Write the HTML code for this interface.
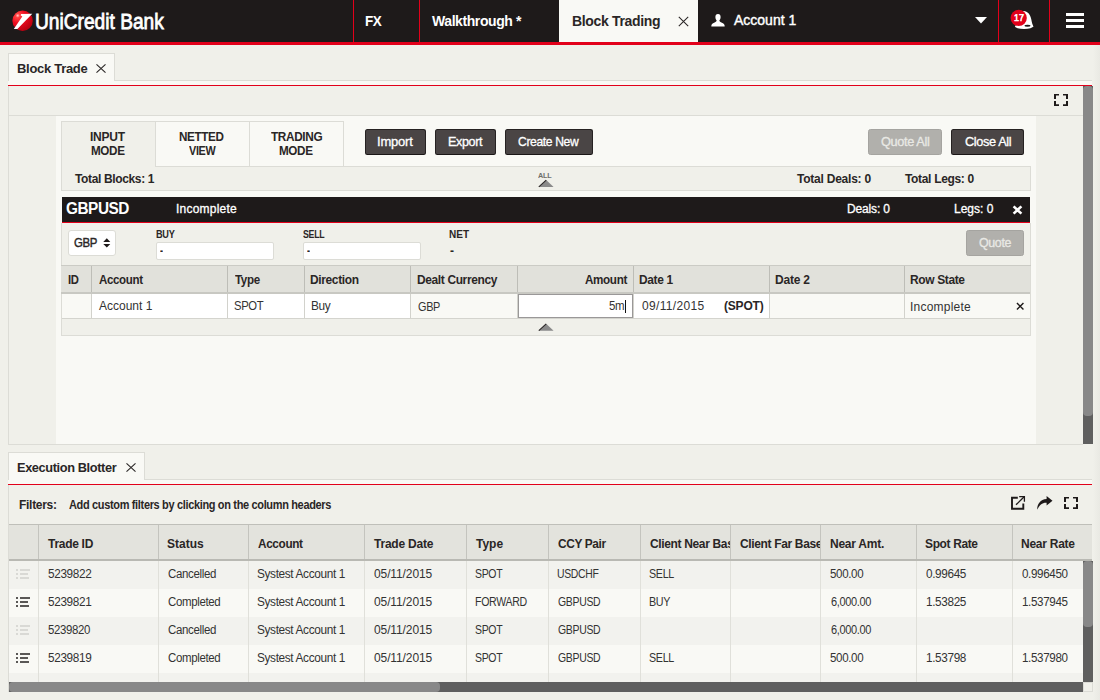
<!DOCTYPE html>
<html><head><meta charset="utf-8"><title>UniCredit Bank - Block Trading</title>
<style>
*{box-sizing:border-box;margin:0;padding:0}
html,body{width:1100px;height:700px;overflow:hidden;background:#f0f0ea;font-family:"Liberation Sans",sans-serif;color:#2a2626}
.abs,.b{position:absolute}
.t{position:absolute;white-space:nowrap;line-height:1}
svg{position:absolute;overflow:visible}
.btn{position:absolute;background:#4a4545;border:1px solid #262222;border-bottom-color:#1a1616;border-radius:2.5px}
.btn.dis{background:#b1b0ac;border-color:#a5a4a0}
.vl{position:absolute;width:1px;background:#c4c4be}
.hl{position:absolute;height:1px;background:#d9d9d3}
</style></head><body>

<!-- ===== header ===== -->
<div class="b" style="left:0;top:0;width:1100px;height:42px;background:#1e1a1a"></div>
<div class="b" style="left:0;top:42px;width:1100px;height:3px;background:#e2001a"></div>
<div class="b" style="left:559px;top:0;width:139px;height:42px;background:#f9f9f5"></div>
<div class="b" style="left:353px;top:0;width:1px;height:42px;background:#e2001a"></div>
<div class="b" style="left:419px;top:0;width:1px;height:42px;background:#e2001a"></div>
<div class="b" style="left:998px;top:0;width:1px;height:42px;background:#e2001a"></div>
<div class="b" style="left:1049px;top:0;width:1px;height:42px;background:#e2001a"></div>
<!-- logo ball -->
<svg style="left:12px;top:10px" width="22" height="22" viewBox="0 0 22 22">
 <defs><radialGradient id="g1" cx="0.26" cy="0.25" r="0.85"><stop offset="0" stop-color="#ffd0d0"/><stop offset="0.12" stop-color="#ff4040"/><stop offset="0.45" stop-color="#ec0a1e"/><stop offset="1" stop-color="#b4000f"/></radialGradient></defs>
 <circle cx="10.6" cy="10.7" r="10.2" fill="url(#g1)"/>
 <path d="M9.1 4.1 L20.3 3.8 L5.4 18.9 L1.8 18.9 L10.3 6.4 L8.6 5.3 Z" fill="#fff"/>
</svg>
<!-- tab close X -->
<svg style="left:678px;top:16px" width="11" height="11" viewBox="0 0 11 11"><path d="M0.8 0.9 L10.2 10.1 M10.2 0.9 L0.8 10.1" stroke="#2a2626" stroke-width="1.05" fill="none"/></svg>
<!-- person -->
<svg style="left:710.7px;top:13.7px" width="14" height="12.4" viewBox="0 0 14 12.4"><path d="M7 0 C8.8 0 9.6 1.3 9.6 3 C9.6 4.4 9.1 5.6 8.4 6.3 C8.4 7.3 9 7.8 10.4 8.4 C12.8 9.3 13.7 10 13.7 12.4 L0.3 12.4 C0.3 10 1.2 9.3 3.6 8.4 C5 7.8 5.6 7.3 5.6 6.3 C4.9 5.6 4.4 4.4 4.4 3 C4.4 1.3 5.2 0 7 0 Z" fill="#fff"/></svg>
<!-- dropdown caret -->
<svg style="left:975px;top:17px" width="12" height="7" viewBox="0 0 12 7"><path d="M0 0 L12 0 L6 6.5 Z" fill="#fff"/></svg>
<!-- bell + badge -->
<svg style="left:1010px;top:9px" width="25" height="22" viewBox="0 0 25 22">
 <path d="M13.6 1.9 C17.6 2.2 20.2 5 21.2 10 C21.8 13.4 22.4 15.4 23.3 17.2 L23.3 18 L10 18 L10 4 Z" fill="#fff"/>
 <ellipse cx="14" cy="17.3" rx="9.1" ry="2.7" fill="#fff"/>
 <ellipse cx="17.5" cy="16.8" rx="3.1" ry="1" fill="#1e1a1a"/>
 <circle cx="8.7" cy="8.9" r="8.1" fill="#e2001a"/>
</svg>
<!-- hamburger -->
<div class="b" style="left:1066px;top:13px;width:18px;height:3px;background:#fff"></div>
<div class="b" style="left:1066px;top:19px;width:18px;height:3px;background:#fff"></div>
<div class="b" style="left:1066px;top:25px;width:18px;height:3px;background:#fff"></div>

<div class="b" style="left:1093px;top:45px;width:7px;height:655px;background:linear-gradient(90deg,#f0f0ea,#e9e9e3)"></div>
<!-- ===== Block Trade tab strip ===== -->
<div class="b" style="left:8px;top:80px;width:1084px;height:1px;background:#dcdcd6"></div>
<div class="b" style="left:8px;top:81px;width:1084px;height:4px;background:#f9f9f5"></div>
<div class="b" style="left:8px;top:53px;width:107px;height:28px;background:#f9f9f5;border:1px solid #dcdcd6;border-bottom:0"></div>
<div class="b" style="left:8px;top:85px;width:1084px;height:1px;background:#e2001a"></div>
<svg style="left:96px;top:64px" width="10" height="9" viewBox="0 0 10 9"><path d="M0.5 0.3 L9.5 8.7 M9.5 0.3 L0.5 8.7" stroke="#2a2626" stroke-width="1.1" fill="none"/></svg>
<!-- panel 1 -->
<div class="b" style="left:8px;top:86px;width:1px;height:359px;background:#dcdcd6"></div>
<div class="b" style="left:9px;top:115px;width:1074px;height:1px;background:#dcdcd6"></div>
<div class="b" style="left:8px;top:444px;width:1075px;height:1px;background:#dcdcd6"></div>
<div class="b" style="left:56px;top:116px;width:980px;height:328px;background:#f9f9f5"></div>
<!-- panel scrollbar -->
<div class="b" style="left:1083px;top:86px;width:10px;height:358px;background:#5f5f5f"></div>
<div class="b" style="left:1083px;top:86px;width:10px;height:330px;background:#888;border-radius:4px"></div>
<!-- expand icon -->
<svg style="left:1054px;top:94px" width="14" height="12" viewBox="0 0 14 12"><path d="M0 0 H5 V1.5 H2 V5 H0 Z M14 0 H9 V1.5 H12 V5 H14 Z M0 12 H5 V10.3 H2 V7 H0 Z M14 12 H9 V10.3 H12 V7 H14 Z" fill="#1e1a1a"/></svg>

<!-- mode tabs -->
<div class="b" style="left:61px;top:121px;width:283px;height:46px;background:#f9f9f5;border:1px solid #dcdcd6"></div>
<div class="b" style="left:62px;top:122px;width:93px;height:46px;background:#f0f0ea"></div>
<div class="b" style="left:155px;top:122px;width:1px;height:44px;background:#dcdcd6"></div>
<div class="b" style="left:249px;top:122px;width:1px;height:44px;background:#dcdcd6"></div>
<!-- totals bar -->
<div class="b" style="left:61px;top:166px;width:970px;height:25px;background:#f0f0ea;border:1px solid #dcdcd6"></div>
<div class="b" style="left:62px;top:166px;width:93px;height:2px;background:#f0f0ea"></div>
<svg style="left:538px;top:180px" width="16" height="7" viewBox="0 0 16 7"><path d="M0.6 6.9 L8.2 0.1 L15.6 6.9 Z" fill="#8a8a8a"/><path d="M0.8 6.8 L8.2 0.2" stroke="#2a2626" stroke-width="1.1" fill="none"/></svg>
<!-- buttons -->
<div class="btn" style="left:365px;top:129px;width:61px;height:26px"></div>
<div class="btn" style="left:435px;top:129px;width:61px;height:26px"></div>
<div class="btn" style="left:505px;top:129px;width:88px;height:26px"></div>
<div class="btn dis" style="left:868px;top:129px;width:74px;height:26px"></div>
<div class="btn" style="left:951px;top:129px;width:73px;height:26px"></div>

<!-- GBPUSD bar -->
<div class="b" style="left:62px;top:197px;width:968px;height:25px;background:#1e1a1a"></div>
<div class="b" style="left:62px;top:222px;width:968px;height:1px;background:#e2001a"></div>
<div class="b" style="left:61px;top:223px;width:970px;height:43px;background:#f0f0ea;border-left:1px solid #dcdcd6;border-right:1px solid #dcdcd6"></div>
<svg style="left:1012px;top:205px" width="11" height="10" viewBox="0 0 11 10"><path d="M1.6 1.4 L9.4 8.6 M9.4 1.4 L1.6 8.6" stroke="#fff" stroke-width="2.6" fill="none"/></svg>
<!-- select -->
<div class="b" style="left:68px;top:230px;width:48px;height:26px;background:#fff;border:1px solid #dcdcd6;border-radius:3px"></div>
<svg style="left:103.2px;top:237.8px" width="7.6" height="9.8" viewBox="0 0 8 10" preserveAspectRatio="none"><path d="M0.3 4 L4 0.3 L7.7 4 Z M0.3 6 L7.7 6 L4 9.7 Z" fill="#1e1a1a"/></svg>
<!-- inputs -->
<div class="b" style="left:156px;top:242px;width:118px;height:18px;background:#fff;border:1px solid #dcdcd6;border-radius:2px"></div>
<div class="b" style="left:303px;top:242px;width:118px;height:18px;background:#fff;border:1px solid #dcdcd6;border-radius:2px"></div>
<div class="btn dis" style="left:966px;top:230px;width:58px;height:26px"></div>

<!-- block table -->
<div class="b" style="left:61px;top:265px;width:970px;height:1px;background:#cbcbc5"></div>
<div class="b" style="left:61px;top:266px;width:970px;height:26px;background:#e1e1db"></div>
<div class="b" style="left:61px;top:292px;width:970px;height:2px;background:#c8c8c2"></div>
<div class="b" style="left:61px;top:294px;width:970px;height:24px;background:#fff"></div>
<div class="b" style="left:61px;top:294px;width:30px;height:24px;background:#f9f9f5"></div>
<div class="b" style="left:411px;top:294px;width:106px;height:24px;background:#f9f9f5"></div>
<div class="b" style="left:770px;top:294px;width:261px;height:24px;background:#f9f9f5"></div>
<div class="b" style="left:61px;top:318px;width:970px;height:1px;background:#d4d4ce"></div>
<div class="b" style="left:61px;top:319px;width:970px;height:17px;background:#f0f0ea;border:1px solid #dcdcd6;border-top:0"></div>
<div class="b" style="left:61px;top:294px;width:1px;height:42px;background:#dcdcd6"></div>
<div class="b" style="left:1030px;top:266px;width:1px;height:70px;background:#dcdcd6"></div>
<div class="b" style="left:91px;top:266px;width:1px;height:26px;background:#bdbdb7"></div>
<div class="b" style="left:91px;top:294px;width:1px;height:24px;background:#d2d2cc"></div>
<div class="b" style="left:227px;top:266px;width:1px;height:26px;background:#bdbdb7"></div>
<div class="b" style="left:227px;top:294px;width:1px;height:24px;background:#d2d2cc"></div>
<div class="b" style="left:304px;top:266px;width:1px;height:26px;background:#bdbdb7"></div>
<div class="b" style="left:304px;top:294px;width:1px;height:24px;background:#d2d2cc"></div>
<div class="b" style="left:410px;top:266px;width:1px;height:26px;background:#bdbdb7"></div>
<div class="b" style="left:410px;top:294px;width:1px;height:24px;background:#d2d2cc"></div>
<div class="b" style="left:517px;top:266px;width:1px;height:26px;background:#bdbdb7"></div>
<div class="b" style="left:517px;top:294px;width:1px;height:24px;background:#d2d2cc"></div>
<div class="b" style="left:633px;top:266px;width:1px;height:26px;background:#bdbdb7"></div>
<div class="b" style="left:633px;top:294px;width:1px;height:24px;background:#d2d2cc"></div>
<div class="b" style="left:769px;top:266px;width:1px;height:26px;background:#bdbdb7"></div>
<div class="b" style="left:769px;top:294px;width:1px;height:24px;background:#d2d2cc"></div>
<div class="b" style="left:904px;top:266px;width:1px;height:26px;background:#bdbdb7"></div>
<div class="b" style="left:904px;top:294px;width:1px;height:24px;background:#d2d2cc"></div>

<div class="b" style="left:518px;top:294px;width:115px;height:24px;background:#fff;border:1px solid #9a9898"></div>
<div class="b" style="left:625px;top:300px;width:1px;height:13px;background:#111"></div>
<svg style="left:538px;top:324px" width="16" height="7" viewBox="0 0 16 7"><path d="M0.6 6.8 L8.2 -0.2 L15.6 6.8 Z" fill="#8a8a8a"/><path d="M0.8 6.7 L8.2 -0.1" stroke="#2a2626" stroke-width="1.1" fill="none"/></svg>
<svg style="left:1016.2px;top:301.9px" width="8.4" height="8.4" viewBox="0 0 9 9"><path d="M1 1 L8 8 M8 1 L1 8" stroke="#1e1a1a" stroke-width="1.5" fill="none"/></svg>

<!-- ===== Execution Blotter ===== -->
<div class="b" style="left:8px;top:479px;width:1084px;height:1px;background:#dcdcd6"></div>
<div class="b" style="left:8px;top:480px;width:1084px;height:4px;background:#f9f9f5"></div>
<div class="b" style="left:8px;top:452px;width:137px;height:28px;background:#f9f9f5;border:1px solid #dcdcd6;border-bottom:0"></div>
<div class="b" style="left:8px;top:484px;width:1084px;height:1px;background:#e2001a"></div>
<svg style="left:126px;top:463px" width="10" height="9" viewBox="0 0 10 9"><path d="M0.5 0.3 L9.5 8.7 M9.5 0.3 L0.5 8.7" stroke="#2a2626" stroke-width="1.1" fill="none"/></svg>
<div class="b" style="left:8px;top:485px;width:1px;height:207px;background:#dcdcd6"></div>
<!-- toolbar icons -->
<svg style="left:1011px;top:496px" width="15" height="14" viewBox="0 0 15 14"><path d="M6.8 1.8 H1 V12.8 H12.3 V7.4" stroke="#1e1a1a" stroke-width="1.9" fill="none"/><path d="M5 8.8 L13.4 0.5" stroke="#1e1a1a" stroke-width="1.3" fill="none"/><path d="M8.2 0.7 H13.4 V5.8" stroke="#1e1a1a" stroke-width="1.3" fill="none"/></svg>
<svg style="left:1037px;top:496px" width="16" height="14" viewBox="0 0 16 14"><path d="M9.6 0 L15.5 4.8 L9.6 9.6 V6.7 C5.4 6.5 2.4 8.6 0.2 13.8 C0 8 3.4 3.3 9.6 2.9 Z" fill="#1e1a1a"/></svg>
<svg style="left:1064px;top:497px" width="14" height="12" viewBox="0 0 14 12"><path d="M0 0 H5 V1.5 H2 V5 H0 Z M14 0 H9 V1.5 H12 V5 H14 Z M0 12 H5 V10.3 H2 V7 H0 Z M14 12 H9 V10.3 H12 V7 H14 Z" fill="#1e1a1a"/></svg>
<!-- blotter table -->
<div class="b" style="left:9px;top:524px;width:1083px;height:37px;background:#e3e3dd"></div>
<div class="b" style="left:9px;top:524px;width:1083px;height:1px;background:#bfbfb9"></div>
<div class="b" style="left:9px;top:559px;width:1083px;height:2px;background:#b9b9b3"></div>
<div class="b" style="left:9px;top:561px;width:1074px;height:28px;background:#f2f2ee"></div>
<div class="b" style="left:16px;top:569px;width:2px;height:2px;background:#d9d9d5"></div><div class="b" style="left:20px;top:569px;width:10px;height:2px;background:#d9d9d5"></div>
<div class="b" style="left:16px;top:573px;width:2px;height:2px;background:#d9d9d5"></div><div class="b" style="left:20px;top:573px;width:8px;height:2px;background:#d9d9d5"></div>
<div class="b" style="left:16px;top:577px;width:2px;height:2px;background:#d9d9d5"></div><div class="b" style="left:20px;top:577px;width:9px;height:2px;background:#d9d9d5"></div>
<div class="b" style="left:9px;top:589px;width:1074px;height:28px;background:#f9f9f5"></div>
<div class="b" style="left:16px;top:597px;width:2px;height:2px;background:#5a5856"></div><div class="b" style="left:20px;top:597px;width:10px;height:2px;background:#5a5856"></div>
<div class="b" style="left:16px;top:601px;width:2px;height:2px;background:#5a5856"></div><div class="b" style="left:20px;top:601px;width:8px;height:2px;background:#5a5856"></div>
<div class="b" style="left:16px;top:605px;width:2px;height:2px;background:#5a5856"></div><div class="b" style="left:20px;top:605px;width:9px;height:2px;background:#5a5856"></div>
<div class="b" style="left:9px;top:617px;width:1074px;height:28px;background:#f2f2ee"></div>
<div class="b" style="left:16px;top:625px;width:2px;height:2px;background:#d9d9d5"></div><div class="b" style="left:20px;top:625px;width:10px;height:2px;background:#d9d9d5"></div>
<div class="b" style="left:16px;top:629px;width:2px;height:2px;background:#d9d9d5"></div><div class="b" style="left:20px;top:629px;width:8px;height:2px;background:#d9d9d5"></div>
<div class="b" style="left:16px;top:633px;width:2px;height:2px;background:#d9d9d5"></div><div class="b" style="left:20px;top:633px;width:9px;height:2px;background:#d9d9d5"></div>
<div class="b" style="left:9px;top:645px;width:1074px;height:28px;background:#f9f9f5"></div>
<div class="b" style="left:16px;top:653px;width:2px;height:2px;background:#5a5856"></div><div class="b" style="left:20px;top:653px;width:10px;height:2px;background:#5a5856"></div>
<div class="b" style="left:16px;top:657px;width:2px;height:2px;background:#5a5856"></div><div class="b" style="left:20px;top:657px;width:8px;height:2px;background:#5a5856"></div>
<div class="b" style="left:16px;top:661px;width:2px;height:2px;background:#5a5856"></div><div class="b" style="left:20px;top:661px;width:9px;height:2px;background:#5a5856"></div>
<div class="b" style="left:9px;top:673px;width:1074px;height:9px;background:#f2f2ee"></div>

<div class="b" style="left:38px;top:525px;width:1px;height:34px;background:#c4c4be"></div>
<div class="b" style="left:38px;top:561px;width:1px;height:121px;background:#e0e0da"></div>
<div class="b" style="left:158px;top:525px;width:1px;height:34px;background:#c4c4be"></div>
<div class="b" style="left:158px;top:561px;width:1px;height:121px;background:#e0e0da"></div>
<div class="b" style="left:248px;top:525px;width:1px;height:34px;background:#c4c4be"></div>
<div class="b" style="left:248px;top:561px;width:1px;height:121px;background:#e0e0da"></div>
<div class="b" style="left:364px;top:525px;width:1px;height:34px;background:#c4c4be"></div>
<div class="b" style="left:364px;top:561px;width:1px;height:121px;background:#e0e0da"></div>
<div class="b" style="left:466px;top:525px;width:1px;height:34px;background:#c4c4be"></div>
<div class="b" style="left:466px;top:561px;width:1px;height:121px;background:#e0e0da"></div>
<div class="b" style="left:548px;top:525px;width:1px;height:34px;background:#c4c4be"></div>
<div class="b" style="left:548px;top:561px;width:1px;height:121px;background:#e0e0da"></div>
<div class="b" style="left:640px;top:525px;width:1px;height:34px;background:#c4c4be"></div>
<div class="b" style="left:640px;top:561px;width:1px;height:121px;background:#e0e0da"></div>
<div class="b" style="left:730px;top:525px;width:1px;height:34px;background:#c4c4be"></div>
<div class="b" style="left:730px;top:561px;width:1px;height:121px;background:#e0e0da"></div>
<div class="b" style="left:820px;top:525px;width:1px;height:34px;background:#c4c4be"></div>
<div class="b" style="left:820px;top:561px;width:1px;height:121px;background:#e0e0da"></div>
<div class="b" style="left:916px;top:525px;width:1px;height:34px;background:#c4c4be"></div>
<div class="b" style="left:916px;top:561px;width:1px;height:121px;background:#e0e0da"></div>
<div class="b" style="left:1012px;top:525px;width:1px;height:34px;background:#c4c4be"></div>
<div class="b" style="left:1012px;top:561px;width:1px;height:121px;background:#e0e0da"></div>

<!-- scrollbars -->
<div class="b" style="left:9px;top:682px;width:1074px;height:10px;background:#5f5f5f"></div>
<div class="b" style="left:9px;top:682px;width:431px;height:10px;background:#888;border-radius:4px"></div>
<div class="b" style="left:1083px;top:561px;width:10px;height:121px;background:#5f5f5f"></div>
<div class="b" style="left:1083px;top:561px;width:10px;height:66px;background:#888;border-radius:4px"></div>
<div class="b" style="left:1083px;top:682px;width:10px;height:10px;background:#f0f0ea;border:1px solid #dcdcd6"></div>

<span class="t" style="left:35px;top:10.6px;font-size:22px;transform:scaleX(0.8707);transform-origin:0 0;color:#fff;-webkit-text-stroke:0.8px #fff;">UniCredit Bank</span>
<span class="t" style="left:365px;top:14px;font-size:14px;transform:scaleX(0.9650);transform-origin:0 0;letter-spacing:-0.42px;font-weight:bold;color:#fff;">FX</span>
<span class="t" style="left:432px;top:14px;font-size:14px;letter-spacing:-0.42px;font-weight:bold;color:#fff;">Walkthrough *</span>
<span class="t" style="left:572px;top:14px;font-size:14px;letter-spacing:-0.33px;font-weight:bold;">Block Trading</span>
<span class="t" style="left:734px;top:13px;font-size:14px;color:#fff;-webkit-text-stroke:0.4px #fff;">Account 1</span>
<span class="t" style="left:1014px;top:13px;font-size:9.8px;transform:scaleX(0.9091) rotate(0.03deg);transform-origin:0 0;color:#fff;-webkit-text-stroke:0.6px #fff;">17</span>
<span class="t" style="left:17px;top:62px;font-size:13px;letter-spacing:-0.30px;font-weight:bold;">Block Trade</span>
<span class="t" style="left:17px;top:461px;font-size:13px;transform:scaleX(0.9825);transform-origin:0 0;letter-spacing:-0.39px;font-weight:bold;">Execution Blotter</span>
<span class="t" style="left:90px;top:131px;font-size:12px;letter-spacing:-0.25px;font-weight:bold;">INPUT</span>
<span class="t" style="left:91px;top:145px;font-size:12px;transform:scaleX(0.9729);transform-origin:0 0;letter-spacing:-0.36px;font-weight:bold;">MODE</span>
<span class="t" style="left:179px;top:131px;font-size:12px;transform:scaleX(0.9735);transform-origin:0 0;letter-spacing:-0.36px;font-weight:bold;">NETTED</span>
<span class="t" style="left:189px;top:145px;font-size:12px;transform:scaleX(0.9024);transform-origin:0 0;letter-spacing:-0.36px;font-weight:bold;">VIEW</span>
<span class="t" style="left:271px;top:131px;font-size:12px;transform:scaleX(0.9838);transform-origin:0 0;letter-spacing:-0.36px;font-weight:bold;">TRADING</span>
<span class="t" style="left:279px;top:145px;font-size:12px;transform:scaleX(0.9729);transform-origin:0 0;letter-spacing:-0.36px;font-weight:bold;">MODE</span>
<span class="t" style="left:377px;top:135px;font-size:13px;letter-spacing:-0.20px;color:#fff;-webkit-text-stroke:0.3px #fff;">Import</span>
<span class="t" style="left:448px;top:135px;font-size:13px;transform:scaleX(0.9700);transform-origin:0 0;letter-spacing:-0.39px;color:#fff;-webkit-text-stroke:0.3px #fff;">Export</span>
<span class="t" style="left:518px;top:135px;font-size:13px;transform:scaleX(0.9314);transform-origin:0 0;letter-spacing:-0.39px;color:#fff;-webkit-text-stroke:0.3px #fff;">Create New</span>
<span class="t" style="left:881px;top:135px;font-size:13px;transform:scaleX(0.9820);transform-origin:0 0;letter-spacing:-0.39px;color:#e9e9e5;-webkit-text-stroke:0.3px #e9e9e5;">Quote All</span>
<span class="t" style="left:965px;top:135px;font-size:13px;transform:scaleX(0.9812);transform-origin:0 0;letter-spacing:-0.39px;color:#fff;-webkit-text-stroke:0.3px #fff;">Close All</span>
<span class="t" style="left:979px;top:236px;font-size:13px;transform:scaleX(0.9569);transform-origin:0 0;letter-spacing:-0.39px;color:#e9e9e5;-webkit-text-stroke:0.3px #e9e9e5;">Quote</span>
<span class="t" style="left:75px;top:173px;font-size:12px;letter-spacing:-0.36px;font-weight:bold;">Total Blocks: 1</span>
<span class="t" style="left:797px;top:173px;font-size:12px;letter-spacing:-0.23px;font-weight:bold;">Total Deals: 0</span>
<span class="t" style="left:905px;top:173px;font-size:12px;letter-spacing:-0.33px;font-weight:bold;">Total Legs: 0</span>
<span class="t" style="left:538px;top:172px;font-size:7.5px;transform:scaleX(0.9622);transform-origin:0 0;letter-spacing:-0.22px;font-weight:bold;color:#6e6e6a;">ALL</span>
<span class="t" style="left:66px;top:201px;font-size:16px;transform:scaleX(0.9598);transform-origin:0 0;letter-spacing:-0.48px;font-weight:bold;color:#fff;">GBPUSD</span>
<span class="t" style="left:176px;top:203px;font-size:12px;letter-spacing:0.22px;color:#fff;-webkit-text-stroke:0.3px #fff;">Incomplete</span>
<span class="t" style="left:847px;top:203px;font-size:12px;letter-spacing:-0.14px;color:#fff;-webkit-text-stroke:0.3px #fff;">Deals: 0</span>
<span class="t" style="left:954px;top:203px;font-size:12px;color:#fff;-webkit-text-stroke:0.3px #fff;">Legs: 0</span>
<span class="t" style="left:74px;top:237px;font-size:12px;transform:scaleX(0.9473);transform-origin:0 0;letter-spacing:-0.36px;-webkit-text-stroke:0.4px #2a2626;">GBP</span>
<span class="t" style="left:156px;top:230px;font-size:10px;transform:scaleX(0.9157);transform-origin:0 0;letter-spacing:-0.30px;font-weight:bold;">BUY</span>
<span class="t" style="left:303px;top:230px;font-size:10px;transform:scaleX(0.8765);transform-origin:0 0;letter-spacing:-0.30px;font-weight:bold;">SELL</span>
<span class="t" style="left:449px;top:230px;font-size:10px;font-weight:bold;">NET</span>
<span class="t" style="left:160px;top:245px;font-size:12px;transform:scaleX(0.7500);transform-origin:0 0;font-weight:bold;">-</span>
<span class="t" style="left:307px;top:245px;font-size:12px;transform:scaleX(0.7500);transform-origin:0 0;font-weight:bold;">-</span>
<span class="t" style="left:450px;top:245px;font-size:12px;font-weight:bold;">-</span>
<span class="t" style="left:68px;top:274px;font-size:12px;transform:scaleX(0.9398);transform-origin:0 0;letter-spacing:-0.36px;font-weight:bold;">ID</span>
<span class="t" style="left:99px;top:274px;font-size:12px;transform:scaleX(0.9599);transform-origin:0 0;letter-spacing:-0.36px;font-weight:bold;">Account</span>
<span class="t" style="left:235px;top:274px;font-size:12px;transform:scaleX(0.9645);transform-origin:0 0;letter-spacing:-0.36px;font-weight:bold;">Type</span>
<span class="t" style="left:310px;top:274px;font-size:12px;transform:scaleX(0.9975);transform-origin:0 0;letter-spacing:-0.36px;font-weight:bold;">Direction</span>
<span class="t" style="left:417px;top:274px;font-size:12px;transform:scaleX(0.9960);transform-origin:0 0;letter-spacing:-0.36px;font-weight:bold;">Dealt Currency</span>
<span class="t" style="left:585px;top:274px;font-size:12px;transform:scaleX(0.9722);transform-origin:0 0;letter-spacing:-0.36px;font-weight:bold;">Amount</span>
<span class="t" style="left:639px;top:274px;font-size:12px;transform:scaleX(0.9940);transform-origin:0 0;letter-spacing:-0.36px;font-weight:bold;">Date 1</span>
<span class="t" style="left:775px;top:274px;font-size:12px;letter-spacing:-0.20px;font-weight:bold;">Date 2</span>
<span class="t" style="left:910px;top:274px;font-size:12px;transform:scaleX(0.9978);transform-origin:0 0;letter-spacing:-0.36px;font-weight:bold;">Row State</span>
<span class="t" style="left:99px;top:300px;font-size:12px;color:#333;">Account 1</span>
<span class="t" style="left:234px;top:300px;font-size:12px;transform:scaleX(0.9379);transform-origin:0 0;letter-spacing:-0.36px;color:#333;">SPOT</span>
<span class="t" style="left:311px;top:300px;font-size:12px;transform:scaleX(0.9855);transform-origin:0 0;letter-spacing:-0.36px;color:#333;">Buy</span>
<span class="t" style="left:418px;top:301px;font-size:12px;transform:scaleX(0.9061);transform-origin:0 0;letter-spacing:-0.36px;color:#333;">GBP</span>
<span class="t" style="left:609px;top:300px;font-size:12px;transform:scaleX(0.9563);transform-origin:0 0;letter-spacing:-0.36px;color:#333;">5m</span>
<span class="t" style="left:642px;top:300px;font-size:12px;letter-spacing:0.33px;color:#333;">09/11/2015</span>
<span class="t" style="left:724px;top:300px;font-size:12px;letter-spacing:-0.20px;font-weight:bold;">(SPOT)</span>
<span class="t" style="left:910px;top:301px;font-size:12px;letter-spacing:0.22px;color:#333;">Incomplete</span>
<span class="t" style="left:19px;top:499px;font-size:12px;letter-spacing:-0.29px;font-weight:bold;">Filters:</span>
<span class="t" style="left:69px;top:499px;font-size:12px;transform:scaleX(0.9140);transform-origin:0 0;letter-spacing:-0.36px;font-weight:bold;">Add custom filters by clicking on the column headers</span>
<span class="t" style="left:48px;top:538px;font-size:12px;letter-spacing:-0.29px;font-weight:bold;">Trade ID</span>
<span class="t" style="left:167px;top:538px;font-size:12px;font-weight:bold;">Status</span>
<span class="t" style="left:258px;top:538px;font-size:12px;transform:scaleX(0.9817);transform-origin:0 0;letter-spacing:-0.36px;font-weight:bold;">Account</span>
<span class="t" style="left:374px;top:538px;font-size:12px;letter-spacing:-0.22px;font-weight:bold;">Trade Date</span>
<span class="t" style="left:476px;top:538px;font-size:12px;font-weight:bold;">Type</span>
<span class="t" style="left:558px;top:538px;font-size:12px;transform:scaleX(0.9901);transform-origin:0 0;letter-spacing:-0.36px;font-weight:bold;">CCY Pair</span>
<span class="t" style="left:830px;top:538px;font-size:12px;letter-spacing:-0.25px;font-weight:bold;">Near Amt.</span>
<span class="t" style="left:925px;top:538px;font-size:12px;transform:scaleX(0.9977);transform-origin:0 0;letter-spacing:-0.36px;font-weight:bold;">Spot Rate</span>
<span class="t" style="left:1021px;top:538px;font-size:12px;letter-spacing:-0.25px;font-weight:bold;">Near Rate</span>
<div class="abs" style="left:641px;top:538px;width:89px;height:16px;overflow:hidden"><span class="t" style="left:9px;top:0;font-size:12px;letter-spacing:-0.35px;font-weight:bold;">Client Near Base</span></div>
<div class="abs" style="left:731px;top:538px;width:89px;height:16px;overflow:hidden"><span class="t" style="left:9px;top:0;font-size:12px;letter-spacing:-0.35px;font-weight:bold;">Client Far Base</span></div>
<span class="t" style="left:48px;top:568px;font-size:12px;transform:scaleX(0.9804);transform-origin:0 0;letter-spacing:-0.36px;color:#333;">5239822</span>
<span class="t" style="left:168px;top:568px;font-size:12px;transform:scaleX(0.9577);transform-origin:0 0;letter-spacing:-0.36px;color:#333;">Cancelled</span>
<span class="t" style="left:257px;top:568px;font-size:12px;transform:scaleX(0.9859);transform-origin:0 0;letter-spacing:-0.36px;color:#333;">Systest Account 1</span>
<span class="t" style="left:374px;top:568px;font-size:12px;letter-spacing:-0.11px;color:#333;">05/11/2015</span>
<span class="t" style="left:475px;top:568px;font-size:12px;transform:scaleX(0.8732);transform-origin:0 0;letter-spacing:-0.36px;color:#333;">SPOT</span>
<span class="t" style="left:557px;top:568px;font-size:12px;transform:scaleX(0.8686);transform-origin:0 0;letter-spacing:-0.36px;color:#333;">USDCHF</span>
<span class="t" style="left:649px;top:568px;font-size:12px;transform:scaleX(0.8915);transform-origin:0 0;letter-spacing:-0.36px;color:#333;">SELL</span>
<span class="t" style="left:830px;top:568px;font-size:12px;transform:scaleX(0.9639);transform-origin:0 0;letter-spacing:-0.36px;color:#333;">500.00</span>
<span class="t" style="left:926px;top:568px;font-size:12px;transform:scaleX(0.9794);transform-origin:0 0;letter-spacing:-0.36px;color:#333;">0.99645</span>
<span class="t" style="left:1022px;top:568px;font-size:12px;transform:scaleX(0.9688);transform-origin:0 0;letter-spacing:-0.36px;color:#333;">0.996450</span>
<span class="t" style="left:48px;top:596px;font-size:12px;transform:scaleX(0.9804);transform-origin:0 0;letter-spacing:-0.36px;color:#333;">5239821</span>
<span class="t" style="left:168px;top:596px;font-size:12px;transform:scaleX(0.9563);transform-origin:0 0;letter-spacing:-0.36px;color:#333;">Completed</span>
<span class="t" style="left:257px;top:596px;font-size:12px;transform:scaleX(0.9859);transform-origin:0 0;letter-spacing:-0.36px;color:#333;">Systest Account 1</span>
<span class="t" style="left:374px;top:596px;font-size:12px;letter-spacing:-0.11px;color:#333;">05/11/2015</span>
<span class="t" style="left:475px;top:596px;font-size:12px;transform:scaleX(0.8817);transform-origin:0 0;letter-spacing:-0.36px;color:#333;">FORWARD</span>
<span class="t" style="left:558px;top:596px;font-size:12px;transform:scaleX(0.8714);transform-origin:0 0;letter-spacing:-0.36px;color:#333;">GBPUSD</span>
<span class="t" style="left:649px;top:596px;font-size:12px;transform:scaleX(0.8977);transform-origin:0 0;letter-spacing:-0.36px;color:#333;">BUY</span>
<span class="t" style="left:831px;top:596px;font-size:12px;transform:scaleX(0.9148);transform-origin:0 0;letter-spacing:-0.36px;color:#333;">6,000.00</span>
<span class="t" style="left:926px;top:596px;font-size:12px;transform:scaleX(0.9789);transform-origin:0 0;letter-spacing:-0.36px;color:#333;">1.53825</span>
<span class="t" style="left:1022px;top:596px;font-size:12px;transform:scaleX(0.9682);transform-origin:0 0;letter-spacing:-0.36px;color:#333;">1.537945</span>
<span class="t" style="left:48px;top:624px;font-size:12px;transform:scaleX(0.9517);transform-origin:0 0;letter-spacing:-0.36px;color:#333;">5239820</span>
<span class="t" style="left:168px;top:624px;font-size:12px;transform:scaleX(0.9577);transform-origin:0 0;letter-spacing:-0.36px;color:#333;">Cancelled</span>
<span class="t" style="left:257px;top:624px;font-size:12px;transform:scaleX(0.9859);transform-origin:0 0;letter-spacing:-0.36px;color:#333;">Systest Account 1</span>
<span class="t" style="left:374px;top:624px;font-size:12px;letter-spacing:-0.11px;color:#333;">05/11/2015</span>
<span class="t" style="left:475px;top:624px;font-size:12px;transform:scaleX(0.8732);transform-origin:0 0;letter-spacing:-0.36px;color:#333;">SPOT</span>
<span class="t" style="left:558px;top:624px;font-size:12px;transform:scaleX(0.8714);transform-origin:0 0;letter-spacing:-0.36px;color:#333;">GBPUSD</span>
<span class="t" style="left:831px;top:624px;font-size:12px;transform:scaleX(0.9148);transform-origin:0 0;letter-spacing:-0.36px;color:#333;">6,000.00</span>
<span class="t" style="left:48px;top:652px;font-size:12px;transform:scaleX(0.9804);transform-origin:0 0;letter-spacing:-0.36px;color:#333;">5239819</span>
<span class="t" style="left:168px;top:652px;font-size:12px;transform:scaleX(0.9563);transform-origin:0 0;letter-spacing:-0.36px;color:#333;">Completed</span>
<span class="t" style="left:257px;top:652px;font-size:12px;transform:scaleX(0.9859);transform-origin:0 0;letter-spacing:-0.36px;color:#333;">Systest Account 1</span>
<span class="t" style="left:374px;top:652px;font-size:12px;letter-spacing:-0.11px;color:#333;">05/11/2015</span>
<span class="t" style="left:475px;top:652px;font-size:12px;transform:scaleX(0.8732);transform-origin:0 0;letter-spacing:-0.36px;color:#333;">SPOT</span>
<span class="t" style="left:558px;top:652px;font-size:12px;transform:scaleX(0.8714);transform-origin:0 0;letter-spacing:-0.36px;color:#333;">GBPUSD</span>
<span class="t" style="left:649px;top:652px;font-size:12px;transform:scaleX(0.8915);transform-origin:0 0;letter-spacing:-0.36px;color:#333;">SELL</span>
<span class="t" style="left:830px;top:652px;font-size:12px;transform:scaleX(0.9639);transform-origin:0 0;letter-spacing:-0.36px;color:#333;">500.00</span>
<span class="t" style="left:926px;top:652px;font-size:12px;transform:scaleX(0.9789);transform-origin:0 0;letter-spacing:-0.36px;color:#333;">1.53798</span>
<span class="t" style="left:1022px;top:652px;font-size:12px;transform:scaleX(0.9682);transform-origin:0 0;letter-spacing:-0.36px;color:#333;">1.537980</span>
</body></html>
